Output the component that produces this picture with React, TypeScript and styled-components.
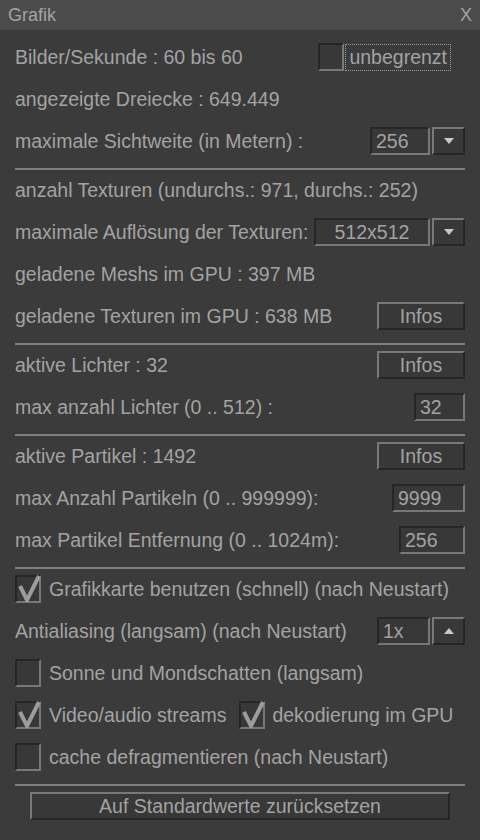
import React from 'react';
import styled, { createGlobalStyle } from 'styled-components';

const Color = {
    bg: '#3b3b3b',
    title: '#4b4b4b',
    text: '#a3a3a3',
    light: '#787878',
    dark: '#262626',
    field: '#383838',
    rule: '#8c8c8c',
};

const GlobalStyle = createGlobalStyle`
    html, body {
        margin: 0;
        padding: 0;
        background: ${Color.bg};
    }
    body {
        font-family: "Liberation Sans", Arial, sans-serif;
        font-size: 19.5px;
        color: ${Color.text};
    }
`;

const Window = styled.div`
    width: 480px;
    height: 840px;
    background: ${Color.bg};
    display: flex;
    flex-direction: column;
`;

const TitleBar = styled.div`
    height: 30px;
    background: ${Color.title};
    display: flex;
    align-items: center;
    justify-content: space-between;
    padding: 0 8px 0 8px;
    font-size: 18px;
`;

const Body = styled.div`
    display: flex;
    flex-direction: column;
    padding: 6px 15px 0 15px;
`;

const Row = styled.div`
    height: 42px;
    display: flex;
    align-items: center;
    justify-content: space-between;
    white-space: nowrap;
`;

const Left = styled.div<{ $gap?: number }>`
    display: flex;
    align-items: center;
    gap: ${({ $gap }) => $gap ?? 8}px;
`;

const Right = styled.div<{ $inset?: number }>`
    display: flex;
    align-items: center;
    margin-right: ${({ $inset }) => $inset ?? 0}px;
`;

const Separator = styled.div`
    height: 2px;
    margin: 6px 0 -1px 0;
    background: ${Color.rule};
    opacity: 0.85;
`;

const Sunken = styled.div<{ $width: number; $center?: boolean }>`
    box-sizing: border-box;
    width: ${({ $width }) => $width}px;
    height: 28px;
    display: flex;
    align-items: center;
    justify-content: ${({ $center }) => ($center ? 'center' : 'flex-start')};
    padding: 0 4px;
    background: ${Color.field};
    border-top: 2px solid ${Color.dark};
    border-left: 2px solid ${Color.dark};
    border-right: 2px solid ${Color.light};
    border-bottom: 2px solid ${Color.light};
`;

const Raised = styled.div<{ $width: number }>`
    box-sizing: border-box;
    width: ${({ $width }) => $width}px;
    height: 28px;
    display: flex;
    align-items: center;
    justify-content: center;
    background: ${Color.field};
    border-top: 2px solid ${Color.light};
    border-left: 2px solid ${Color.light};
    border-right: 2px solid ${Color.dark};
    border-bottom: 2px solid ${Color.dark};
`;

const Select = styled.div`
    display: flex;
    align-items: center;
    gap: 2px;
`;

const Box = styled.div`
    position: relative;
    box-sizing: border-box;
    width: 26px;
    height: 28px;
    background: ${Color.field};
    border-top: 2px solid ${Color.dark};
    border-left: 2px solid ${Color.dark};
    border-right: 2px solid ${Color.light};
    border-bottom: 2px solid ${Color.light};
    flex: none;
`;

const Tick = styled.svg`
    position: absolute;
    left: 0;
    top: -5px;
`;

const FocusLabel = styled.div`
    height: 27px;
    display: flex;
    align-items: center;
    padding: 0 3px 0 3px;
    border: 1px dotted #9a9a9a;
    box-sizing: border-box;
    margin-left: 1px;
`;

const ResetButton = styled(Raised)`
    margin: 7px auto 0 auto;
`;

const Arrow: React.FC<{ up?: boolean }> = ({ up }) => (
    <svg width="10" height="6" viewBox="0 0 10 6">
        <path d={up ? 'M0 6 L5 0 L10 6 Z' : 'M0 0 L5 6 L10 0 Z'} fill="#c8c8c8" />
    </svg>
);

const Checkbox: React.FC<{ checked?: boolean }> = ({ checked }) => (
    <Box>
        {checked && (
            <Tick width="26" height="30" viewBox="0 0 26 30">
                <path d="M3 14 L10 28 L22 4" stroke="#9c9c9c" strokeWidth="4" fill="none" />
            </Tick>
        )}
    </Box>
);

const CheckItem: React.FC<{ checked?: boolean; label: string; gap?: number }> = ({ checked, label, gap }) => (
    <Left $gap={gap}>
        <Checkbox checked={checked} />
        <span>{label}</span>
    </Left>
);

const Dropdown: React.FC<{ value: string; width: number; center?: boolean; up?: boolean }> = ({
    value,
    width,
    center,
    up,
}) => (
    <Select>
        <Sunken $width={width} $center={center}>
            {value}
        </Sunken>
        <Raised $width={33}>
            <Arrow up={up} />
        </Raised>
    </Select>
);

const Infos = () => <Raised $width={88}>Infos</Raised>;

const App: React.FC = () => (
    <Window>
        <GlobalStyle />
        <TitleBar>
            <span>Grafik</span>
            <span>X</span>
        </TitleBar>
        <Body>
            <Row>
                <span>Bilder/Sekunde : 60 bis 60</span>
                <Right $inset={14}>
                    <Checkbox />
                    <FocusLabel>unbegrenzt</FocusLabel>
                </Right>
            </Row>
            <Row>
                <span>angezeigte Dreiecke : 649.449</span>
            </Row>
            <Row>
                <span>maximale Sichtweite (in Metern) :</span>
                <Dropdown value="256" width={60} />
            </Row>
            <Separator />
            <Row>
                <span>anzahl Texturen (undurchs.: 971, durchs.: 252)</span>
            </Row>
            <Row>
                <span>maximale Auflösung der Texturen:</span>
                <Dropdown value="512x512" width={116} center />
            </Row>
            <Row>
                <span>geladene Meshs im GPU : 397 MB</span>
            </Row>
            <Row>
                <span>geladene Texturen im GPU : 638 MB</span>
                <Infos />
            </Row>
            <Separator />
            <Row>
                <span>aktive Lichter : 32</span>
                <Infos />
            </Row>
            <Row>
                <span>max anzahl Lichter (0 .. 512) :</span>
                <Sunken $width={51}>32</Sunken>
            </Row>
            <Separator />
            <Row>
                <span>aktive Partikel : 1492</span>
                <Infos />
            </Row>
            <Row>
                <span>max Anzahl Partikeln (0 .. 999999):</span>
                <Sunken $width={73}>9999</Sunken>
            </Row>
            <Row>
                <span>max Partikel Entfernung (0 .. 1024m):</span>
                <Sunken $width={66}>256</Sunken>
            </Row>
            <Separator />
            <Row>
                <CheckItem checked label="Grafikkarte benutzen (schnell) (nach Neustart)" />
            </Row>
            <Row>
                <span>Antialiasing (langsam) (nach Neustart)</span>
                <Dropdown value="1x" width={53} up />
            </Row>
            <Row>
                <CheckItem label="Sonne und Mondschatten (langsam)" />
            </Row>
            <Row>
                <Left $gap={13}>
                    <CheckItem checked label="Video/audio streams" />
                    <CheckItem checked label="dekodierung im GPU" gap={7} />
                </Left>
            </Row>
            <Row>
                <CheckItem label="cache defragmentieren (nach Neustart)" />
            </Row>
            <Separator />
            <ResetButton $width={420}>Auf Standardwerte zurücksetzen</ResetButton>
        </Body>
    </Window>
);

export default App;
